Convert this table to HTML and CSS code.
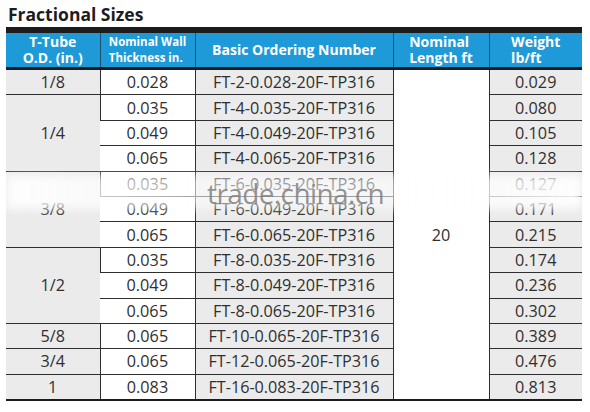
FILE: index.html
```html
<!DOCTYPE html>
<html>
<head>
<meta charset="utf-8">
<link rel="stylesheet" href="styles.css">
</head>
<body>
<div class="page">
  <h1 class="title">Fractional Sizes</h1>
  <div class="wrap">
    <table class="spec">
      <colgroup>
        <col class="c1"><col class="c2"><col class="c3"><col class="c4"><col class="c5">
      </colgroup>
      <thead>
        <tr>
          <th><span class="blk center">T-Tube<br>O.D. (in.)</span></th>
          <th class="small"><span class="blk">Nominal Wall<br>Thickness in.</span></th>
          <th>Basic Ordering Number</th>
          <th><span class="blk">Nominal<br>Length ft</span></th>
          <th><span class="blk">Weight<br>lb/ft</span></th>
        </tr>
      </thead>
      <tbody>
        <tr><td class="g">1/8</td><td>0.028</td><td class="g">FT-2-0.028-20F-TP316</td><td class="len" rowspan="13">20</td><td class="g">0.029</td></tr>
        <tr><td class="g" rowspan="3">1/4</td><td>0.035</td><td class="g">FT-4-0.035-20F-TP316</td><td class="g">0.080</td></tr>
        <tr><td>0.049</td><td class="g">FT-4-0.049-20F-TP316</td><td class="g">0.105</td></tr>
        <tr><td>0.065</td><td class="g">FT-4-0.065-20F-TP316</td><td class="g">0.128</td></tr>
        <tr><td class="g" rowspan="3">3/8</td><td>0.035</td><td class="g">FT-6-0.035-20F-TP316</td><td class="g">0.127</td></tr>
        <tr><td>0.049</td><td class="g">FT-6-0.049-20F-TP316</td><td class="g">0.171</td></tr>
        <tr><td>0.065</td><td class="g">FT-6-0.065-20F-TP316</td><td class="g">0.215</td></tr>
        <tr><td class="g" rowspan="3">1/2</td><td>0.035</td><td class="g">FT-8-0.035-20F-TP316</td><td class="g">0.174</td></tr>
        <tr><td>0.049</td><td class="g">FT-8-0.049-20F-TP316</td><td class="g">0.236</td></tr>
        <tr><td>0.065</td><td class="g">FT-8-0.065-20F-TP316</td><td class="g">0.302</td></tr>
        <tr><td class="g">5/8</td><td>0.065</td><td class="g">FT-10-0.065-20F-TP316</td><td class="g">0.389</td></tr>
        <tr><td class="g">3/4</td><td>0.065</td><td class="g">FT-12-0.065-20F-TP316</td><td class="g">0.476</td></tr>
        <tr><td class="g">1</td><td>0.083</td><td class="g">FT-16-0.083-20F-TP316</td><td class="g">0.813</td></tr>
      </tbody>
    </table>
    <div class="haze"></div>
    <div class="watermark">trade.china.cn</div>
  </div>
</div>
</body>
</html>
```

FILE: styles.css
```css
html, body {
  margin: 0;
  padding: 0;
  background: #ffffff;
}
.page {
  width: 590px;
  height: 412px;
  font-family: "Open Sans", "Noto Sans", sans-serif;
  color: #2a2a2a;
}
.title {
  margin: 0;
  padding: 3px 0 0 8px;
  height: 24px;
  font-size: 17.5px;
  font-weight: 700;
  line-height: 22px;
  color: #1d1d1d;
}
.wrap {
  position: relative;
  margin-left: 6px;
  width: 576px;
}
.spec {
  border-collapse: collapse;
  table-layout: fixed;
  width: 576px;
  border-top: 6px solid #1c1c1c;
  border-bottom: 2px solid #1c1c1c;
}
.c1 { width: 94px; }
.c2 { width: 95px; }
.c3 { width: 198px; }
.c4 { width: 96px; }
.c5 { width: 93px; }
.spec th {
  background: #1e9ad8;
  color: #ffffff;
  font-size: 14px;
  font-weight: 700;
  line-height: 16px;
  height: 34px;
  padding: 0;
  text-align: center;
  vertical-align: middle;
  border-left: 1px solid #1d4f6e;
  border-bottom: 3px solid #1c1c1c;
}
.spec th:first-child { border-left: none; }
.spec th.small { font-size: 11.5px; line-height: 16px; }
.blk {
  display: inline-block;
  text-align: left;
}
.blk.center { text-align: center; }
.spec td {
  height: 24.4px;
  padding: 0;
  font-size: 16.2px;
  line-height: 20px;
  text-align: center;
  vertical-align: middle;
  border-top: 1px solid #2e2e2e;
  border-left: 1px solid #2e2e2e;
  background: #ffffff;
  color: #2f2f2f;
}
.spec td.g { background: #ebebeb; }
.spec tr td:first-child { border-left: none; }
.spec tbody tr:first-child td { border-top: none; }
.haze {
  position: absolute;
  left: 0;
  top: 148px;
  width: 576px;
  height: 34px;
  background: linear-gradient(90deg, rgba(255,255,255,0.9), rgba(255,255,255,0.55) 35%, rgba(255,255,255,0.55) 65%, rgba(255,255,255,0.9));
  filter: blur(4px);
}
.watermark {
  position: absolute;
  left: 201px;
  top: 149px;
  font-family: "Open Sans", sans-serif;
  font-weight: 400;
  font-size: 28px;
  line-height: 34px;
  color: rgba(120, 120, 120, 0.8);
  letter-spacing: -0.6px;
}
```
